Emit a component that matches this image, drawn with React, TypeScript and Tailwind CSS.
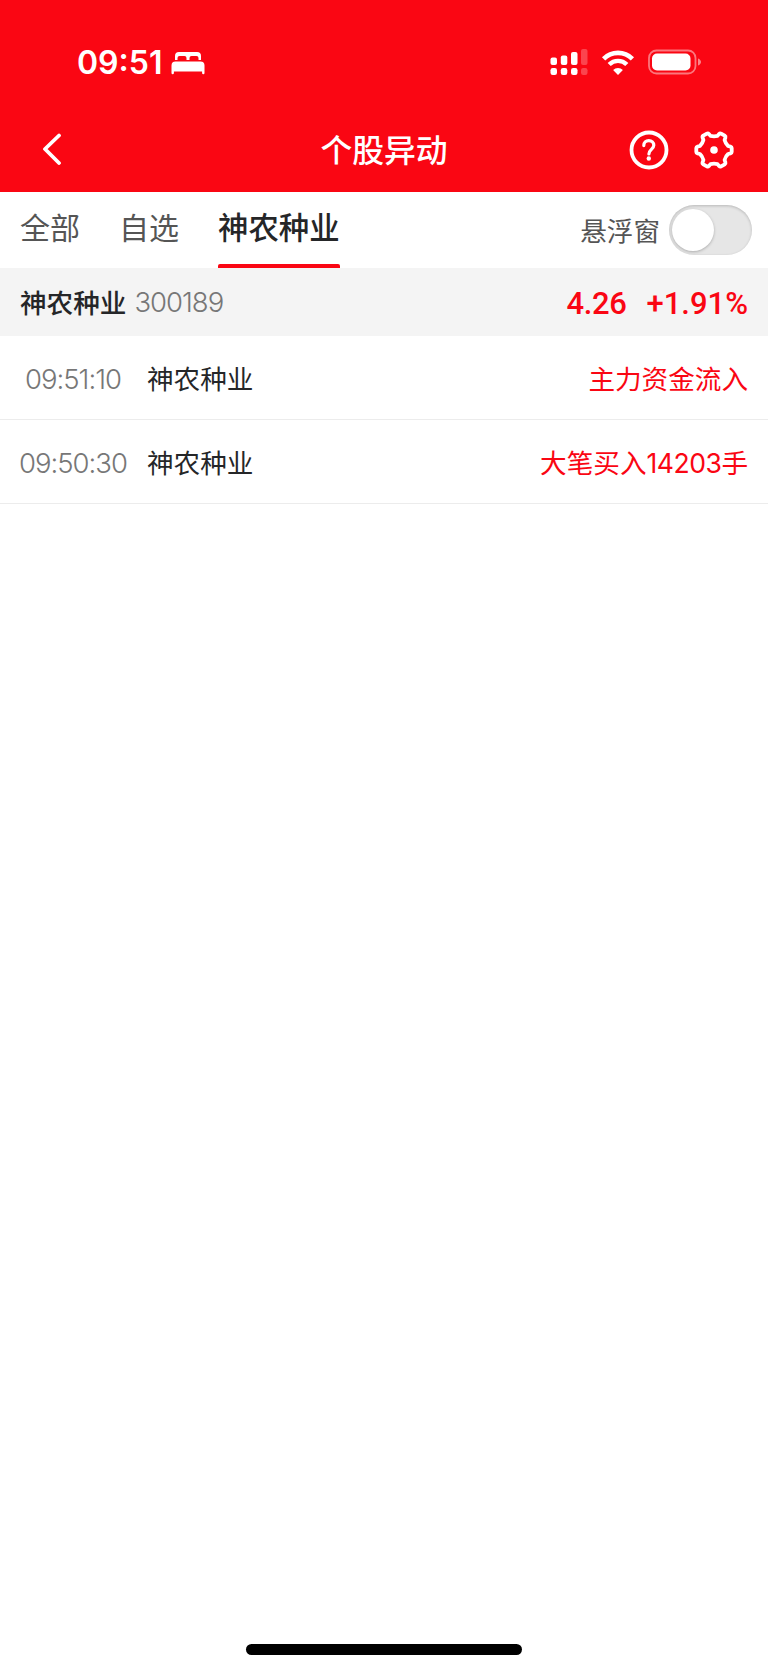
const tabs = [
  { label: "全部", active: false },
  { label: "自选", active: false },
  { label: "神农种业", active: true },
];

const events = [
  { time: "09:51:10", name: "神农种业", before: "主力资金流入", count: "", after: "" },
  { time: "09:50:30", name: "神农种业", before: "大笔买入", count: "14203", after: "手" },
];

function BedIcon() {
  return (
    <svg width="34" height="24" viewBox="0 0 34 24" fill="#fff">
      <path d="M4 9V5a4 4 0 0 1 4-4h18a4 4 0 0 1 4 4v4h-2.500V7a2 2 0 0 0-2-2H20.500a2 2 0 0 0-2 2v2h-3V7a2 2 0 0 0-2-2H8.500a2 2 0 0 0-2 2v2z" />
      <path d="M0.500 14.500a4 4 0 0 1 4-4h25a4 4 0 0 1 4 4V22a1.200 1.200 0 0 1-2.400 0v-1.500H2.900V22a1.200 1.200 0 0 1-2.400 0z" />
    </svg>
  );
}

function SignalIcon() {
  return (
    <svg width="38" height="28" viewBox="0 0 38 28" fill="#fff">
      <rect x="0.500" y="9.500" width="6.500" height="7.500" rx="2" />
      <rect x="10.800" y="7.500" width="6.500" height="9.500" rx="2" />
      <rect x="21" y="4" width="6.500" height="13" rx="2" />
      <rect x="31" y="1" width="6.500" height="16" rx="2" opacity="0.25" />
      <rect x="0.500" y="20" width="6.500" height="7" rx="2.200" />
      <rect x="10.800" y="20" width="6.500" height="7" rx="2.200" />
      <rect x="21" y="20" width="6.500" height="7" rx="2.200" />
      <rect x="31" y="20" width="6.500" height="7" rx="2.200" opacity="0.25" />
    </svg>
  );
}

function WifiIcon() {
  return (
    <svg width="34" height="26" viewBox="0 0 34 26" fill="none" stroke="#fff">
      <path d="M2.600 8.900a20.300 20.300 0 0 1 28.800 0" strokeWidth="4.600" />
      <path d="M8.200 14.500a12.400 12.400 0 0 1 17.600 0" strokeWidth="4.400" />
      <path d="M17 25l-4.900-5a7 7 0 0 1 9.800 0z" fill="#fff" stroke="none" />
    </svg>
  );
}

function BatteryIcon() {
  return (
    <svg width="54" height="26" viewBox="0 0 54 26" fill="none">
      <rect x="1" y="1.500" width="46.500" height="23" rx="7.500" stroke="#fff" strokeOpacity="0.45" strokeWidth="1.800" />
      <rect x="4" y="4.500" width="38.500" height="17" rx="5" fill="#fff" />
      <path d="M50 9.500c1.900.6 3 2 3 3.500s-1.100 2.900-3 3.500z" fill="#fff" fillOpacity="0.5" />
    </svg>
  );
}

function BackIcon() {
  return (
    <svg width="20" height="32" viewBox="0 0 20 32" fill="none" stroke="#fff" strokeWidth="3.800" strokeLinecap="round" strokeLinejoin="round">
      <path d="M17 2.500L3 16l14 14" />
    </svg>
  );
}

function HelpIcon() {
  return (
    <svg width="40" height="40" viewBox="0 0 40 40" fill="none" stroke="#fff" strokeWidth="3.800">
      <circle cx="20" cy="20" r="17.500" />
      <path d="M14.800 15.600c0-3 2.100-4.900 5-4.900s5 1.900 5 4.600c0 4-4.900 4.300-4.900 8.700" strokeWidth="3.200" strokeLinecap="round" />
      <circle cx="19.800" cy="28.500" r="2.200" fill="#fff" stroke="none" />
    </svg>
  );
}

function GearIcon() {
  return (
    <svg width="40" height="40" viewBox="0 0 40 40" fill="none" stroke="#fff" strokeWidth="3.800" strokeLinejoin="round">
      <path d="M16.500 5.900q3.500.8 7 0l1.600-1.900q.9-1 2-.4l3.600 2.100q1.100.7.700 2l-.8 2.300q1 3.900 3.500 6l2.400.6q1.200.3 1.200 1.400v4q0 1.100-1.200 1.400l-2.400.6q-2.500 2.100-3.500 6l.8 2.300q.4 1.300-.7 2l-3.600 2.100q-1.100.6-2-.4l-1.600-1.900q-3.500-.8-7 0l-1.600 1.900q-.9 1-2 .4l-3.600-2.100q-1.100-.7-.7-2l.8-2.300q-1-3.900-3.500-6l-2.400-.6q-1.200-.3-1.200-1.400v-4q0-1.100 1.200-1.400l2.400-.6q2.500-2.100 3.500-6l-.8-2.300q-.4-1.300.7-2l3.600-2.100q1.100-.6 2 .4z" />
      <circle cx="20" cy="20" r="3.800" fill="#fff" stroke="none" />
    </svg>
  );
}

export default function App() {
  return (
    <div className="flex h-[1670px] w-[768px] flex-col bg-white font-['Noto_Sans_CJK_SC',sans-serif] leading-none">
      <header className="flex h-48 flex-col bg-[#fa0613] text-white">
        <div className="flex h-[108px] items-center pt-[17px] pr-[66px] pl-[77px]">
          <span className="w-[94px] pt-px font-['Inter',sans-serif] text-[32px] font-semibold whitespace-nowrap">09:51</span>
          <BedIcon />
          <div className="ml-auto flex items-center">
            <div className="pb-0.5">
              <SignalIcon />
            </div>
            <div className="ml-[13px]">
              <WifiIcon />
            </div>
            <div className="ml-[13px] pb-px">
              <BatteryIcon />
            </div>
          </div>
        </div>
        <div className="grid h-[84px] grid-cols-[1fr_auto_1fr] items-center px-[33px]">
          <div className="pb-0.5 pl-[9px]">
            <BackIcon />
          </div>
          <h1 className="pb-[3px] text-[31.800px] font-medium">个股异动</h1>
          <div className="flex items-center justify-end gap-[25px] pr-px">
            <HelpIcon />
            <GearIcon />
          </div>
        </div>
      </header>

      <nav className="flex h-[76px] items-stretch pr-4 pl-5">
        <div className="flex gap-[39px]">
          {tabs.map((tab) => (
            <div
              key={tab.label}
              className={
                tab.active
                  ? "flex flex-col justify-between text-[30.400px] font-medium text-[#252628]"
                  : "flex flex-col justify-between text-[30px] text-[#555]"
              }
            >
              <span className="pt-[19px]">{tab.label}</span>
              {tab.active && <span className="h-1 rounded-t-xs bg-[#fa0613]" />}
            </div>
          ))}
        </div>
        <div className="ml-auto flex items-center">
          <span className="text-[26.600px] text-[#555]">悬浮窗</span>
          <div className="ml-[9px] flex h-[50px] w-[83px] items-center rounded-full bg-[#e6e6e6] pl-[3px] shadow-[inset_0_1px_3px_rgba(0,0,0,0.2)]">
            <span className="size-[42px] rounded-full bg-white shadow-[0_1px_3px_rgba(0,0,0,0.25)]" />
          </div>
        </div>
      </nav>

      <section className="flex h-[68px] items-center bg-[#f4f4f4] px-5">
        <span className="pt-px text-[26.600px] font-medium text-[#252628]">神农种业</span>
        <span className="ml-2 pt-0.5 font-['Inter',sans-serif] text-[27.500px] font-[350] tracking-[-1px] text-[#777]">300189</span>
        <div className="ml-auto flex gap-5 pt-[3px] font-['Roboto',sans-serif] text-[31px] font-medium text-[#fa0613]">
          <span className="tracking-[-0.4px]">4.26</span>
          <span>+1.91%</span>
        </div>
      </section>

      <ul>
        {events.map((event) => (
          <li key={event.time} className="flex h-[84px] items-center border-b border-[#ececec] pt-0.5 pr-5">
            <span className="w-[147px] pt-0.5 pr-px text-center font-['Inter',sans-serif] text-[27.500px] font-[350] tracking-[-1px] text-[#777]">
              {event.time}
            </span>
            <span className="text-[26.600px] text-[#252628]">{event.name}</span>
            <span className="ml-auto text-[26.600px] text-[#fa0613]">
              {event.before}
              {event.count && <span className="font-['Inter',sans-serif] tracking-[-0.5px]">{event.count}</span>}
              {event.after}
            </span>
          </li>
        ))}
      </ul>

      <div className="mx-auto mt-auto mb-[15px] h-[11px] w-[276px] rounded-full bg-black" />
    </div>
  );
}
